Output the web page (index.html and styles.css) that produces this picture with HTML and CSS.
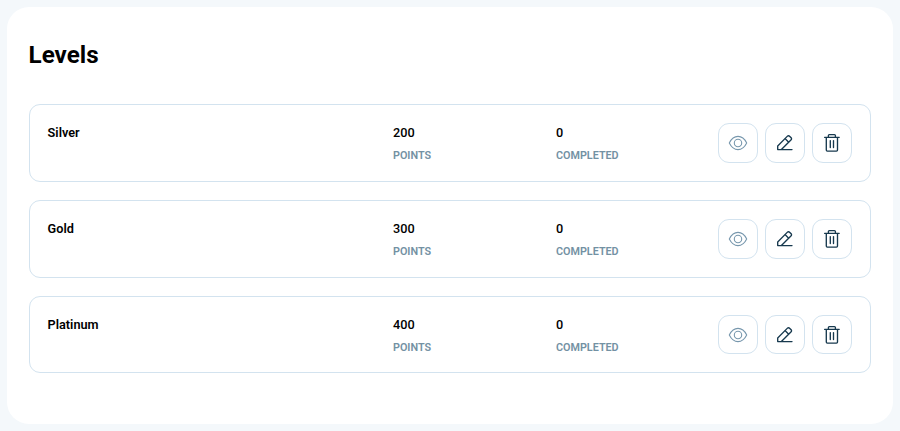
FILE: index.html
```html
<!DOCTYPE html>
<html lang="en">
<head>
<meta charset="utf-8">
<title>Levels</title>
<link rel="stylesheet" href="styles.css">
</head>
<body>
<svg class="sprite" aria-hidden="true">
  <symbol id="eye" viewBox="0 0 20 20">
    <path d="M1.3 10C3.2 6.2 6.2 3.4 10 3.4S16.8 6.2 18.7 10C16.8 13.8 13.8 16.6 10 16.6S3.2 13.8 1.3 10Z"/>
    <circle cx="10" cy="10" r="3.7"/>
  </symbol>
  <symbol id="pencil" viewBox="0 0 20 20">
    <path d="M17 16.6H2.7V13L12.2 3.4Q13.5 2.1 14.8 3.4L15.9 4.5Q17.2 5.8 15.9 7.1L6.4 16.6M10 5.6L13.7 9.3"/>
  </symbol>
  <symbol id="trash" viewBox="0 0 20 20">
    <path d="M2.6 4.3H17.2M6.4 4.3V2.5Q6.4 1.6 7.3 1.6H12.5Q13.4 1.6 13.4 2.5V4.3M4.3 4.3V17.1Q4.3 18.1 5.3 18.1H14.5Q15.5 18.1 15.5 17.1V4.3M8.3 7.6V14.6M11.5 7.6V14.6"/>
  </symbol>
</svg>
<main class="panel">
  <h1 class="title">Levels</h1>
  <div class="levels">
    <section class="level">
      <div class="name">Silver</div>
      <div class="stat"><div class="value">200</div><div class="label">POINTS</div></div>
      <div class="stat"><div class="value">0</div><div class="label">COMPLETED</div></div>
      <div class="actions">
        <button class="action muted" aria-label="View"><svg><use href="#eye"/></svg></button>
        <button class="action" aria-label="Edit"><svg><use href="#pencil"/></svg></button>
        <button class="action" aria-label="Delete"><svg><use href="#trash"/></svg></button>
      </div>
    </section>
    <section class="level">
      <div class="name">Gold</div>
      <div class="stat"><div class="value">300</div><div class="label">POINTS</div></div>
      <div class="stat"><div class="value">0</div><div class="label">COMPLETED</div></div>
      <div class="actions">
        <button class="action muted" aria-label="View"><svg><use href="#eye"/></svg></button>
        <button class="action" aria-label="Edit"><svg><use href="#pencil"/></svg></button>
        <button class="action" aria-label="Delete"><svg><use href="#trash"/></svg></button>
      </div>
    </section>
    <section class="level">
      <div class="name">Platinum</div>
      <div class="stat"><div class="value">400</div><div class="label">POINTS</div></div>
      <div class="stat"><div class="value">0</div><div class="label">COMPLETED</div></div>
      <div class="actions">
        <button class="action muted" aria-label="View"><svg><use href="#eye"/></svg></button>
        <button class="action" aria-label="Edit"><svg><use href="#pencil"/></svg></button>
        <button class="action" aria-label="Delete"><svg><use href="#trash"/></svg></button>
      </div>
    </section>
  </div>
</main>
</body>
</html>
```
FILE: styles.css
```css
* {
  box-sizing: border-box;
}

body {
  margin: 0;
  padding: 7px;
  height: 431px;
  background: #f4f8fb;
  color: #000;
  font-family: Roboto, "Liberation Sans", sans-serif;
}

.sprite {
  display: none;
}

.panel {
  height: 417px;
  padding: 33px 22px 0 21.6px;
  border-radius: 22px;
  background: #fff;
}

.title {
  margin: 0 0 34.2px;
  font-size: 24.2px;
  line-height: 30px;
  font-weight: 700;
}

.levels {
  display: flex;
  flex-direction: column;
  gap: 18.2px;
}

.level {
  display: grid;
  grid-template-columns: 345.4px 163px 162px 134px;
  height: 77.6px;
  padding: 18px;
  border: 1px solid #d3e3ef;
  border-radius: 11px;
}

.name,
.value {
  font-size: 12.7px;
  line-height: 20px;
}

.name {
  font-weight: 600;
}

.value {
  font-weight: 500;
}

.label {
  margin-top: 3px;
  color: #7391a3;
  font-size: 10.8px;
  line-height: 20px;
  font-weight: 600;
}

.actions {
  display: flex;
  gap: 7px;
}

.action {
  display: flex;
  align-items: center;
  justify-content: center;
  width: 40px;
  height: 39.6px;
  padding: 0;
  border: 1px solid #d3e3ef;
  border-radius: 11px;
  background: #fff;
  color: #17394e;
}

.action svg {
  width: 20px;
  height: 20px;
  fill: none;
  stroke: currentColor;
  stroke-width: 1.35;
  stroke-linejoin: round;
  stroke-linecap: round;
}

.action.muted {
  color: #7797ad;
}

.muted svg {
  stroke-width: 1.1;
}
```
